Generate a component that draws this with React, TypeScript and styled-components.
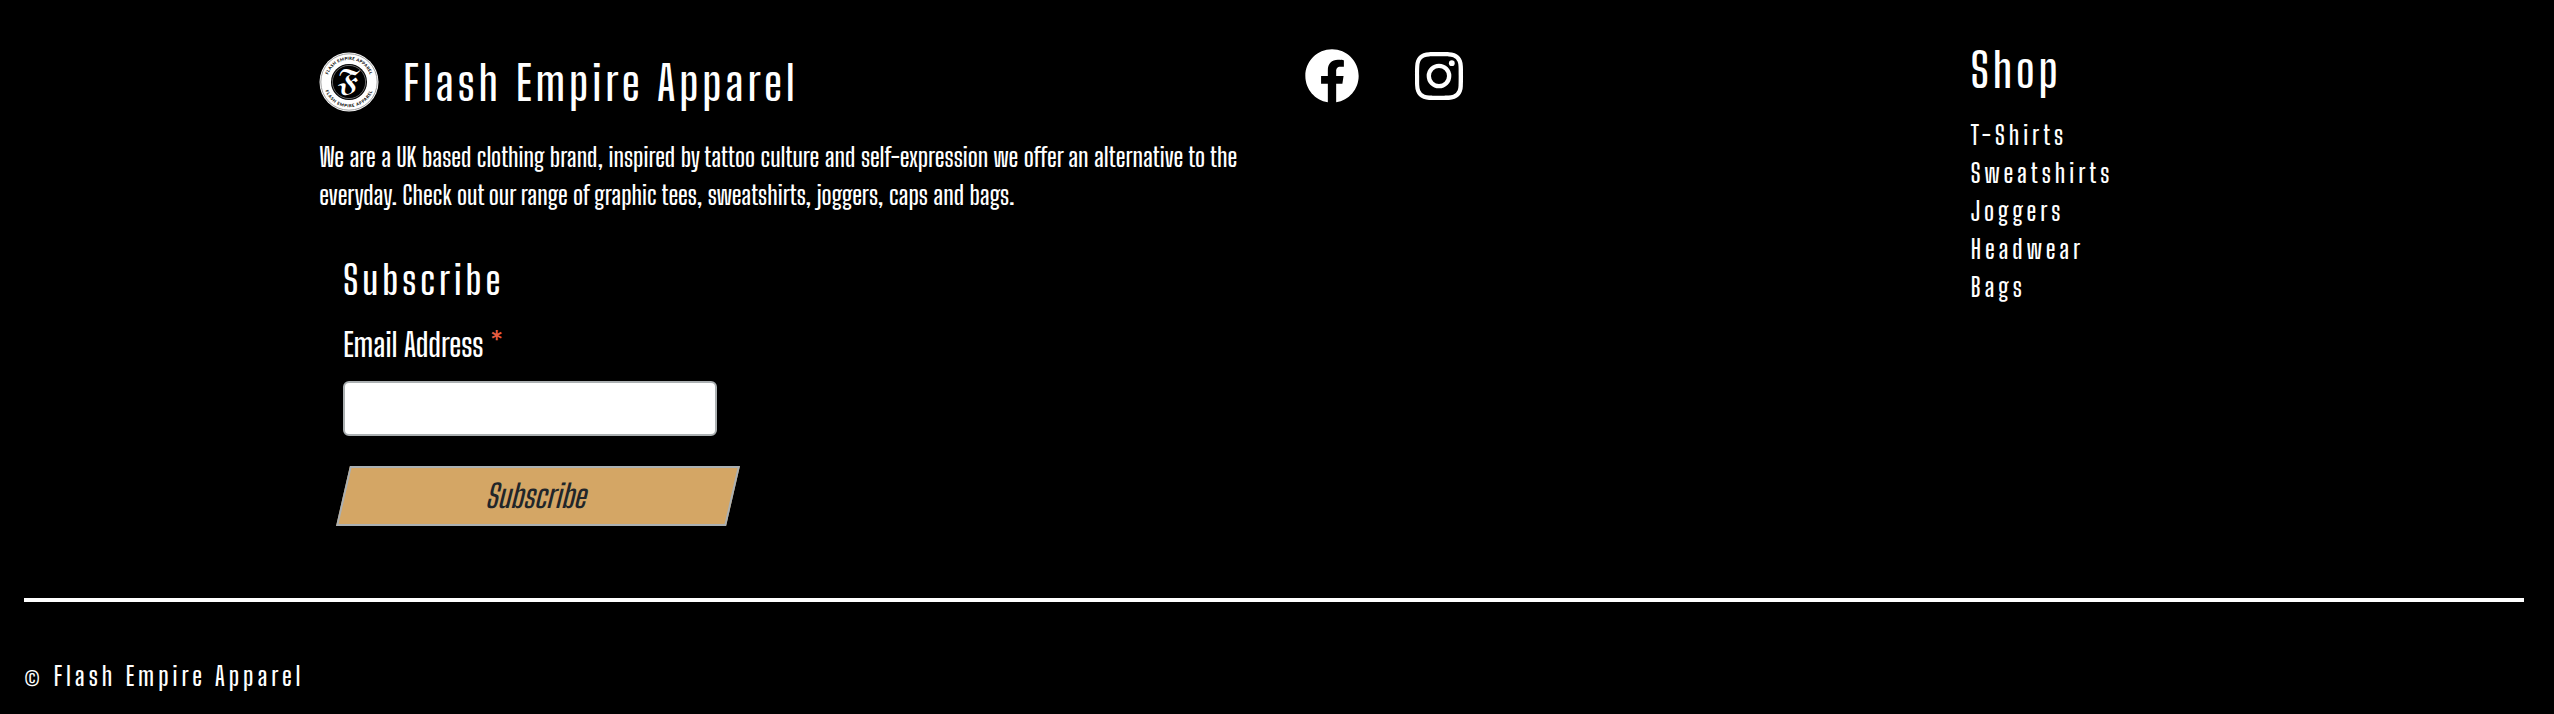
import React from "react";
import styled, { createGlobalStyle } from "styled-components";
import { BiLogoFacebookCircle, BiLogoInstagram } from "react-icons/bi";

const GlobalStyle = createGlobalStyle`
  *, *::before, *::after { box-sizing: border-box; }
  html, body { margin: 0; background: #000; }
  body {
    color: #fff;
    font-family: "Big Shoulders Display", "Roboto Condensed", sans-serif;
    font-size: 26px;
    font-weight: 600;
    line-height: 38px;
  }
`;

const Footer = styled.footer`
  min-height: 100vh;
  display: flex;
  flex-direction: column;
`;

const Columns = styled.div`
  display: grid;
  grid-template-columns: 940fr 631fr 264fr;
  column-gap: 40px;
  align-items: start;
  padding: 34px 12.5% 0;
`;

const Column = styled.section`
  min-width: 0;
`;

const Brand = styled.div`
  display: flex;
  align-items: center;
  gap: 24px;
  margin: 17px 0 25px;
`;

const Logo = styled.svg`
  width: 60px;
  height: 60px;
  flex: none;
`;

const Heading = styled.h2<{ $size: number; $line?: number }>`
  margin: 0;
  padding-top: 2px;
  font-size: ${(p) => p.$size}px;
  line-height: ${(p) => p.$line ?? 60}px;
  font-weight: 600;
  letter-spacing: 4px;
`;

const About = styled.p`
  margin: 0;
`;

const Form = styled.form`
  display: flex;
  flex-direction: column;
  align-items: flex-start;
  padding: 34px 24px 0;
`;

const Label = styled.label`
  display: flex;
  gap: 7px;
  margin: 15px 0 16px;
  font-size: 32px;
  line-height: 40px;
`;

const Required = styled.span`
  color: #e85c41;
  font-size: 48px;
  line-height: 50px;
  height: 40px;
`;

const EmailInput = styled.input`
  width: 374px;
  max-width: 100%;
  height: 55px;
  padding: 0 12px;
  border: 2px solid #abb0b2;
  border-radius: 6px;
  background: #fff;
  font: inherit;
`;

const SubmitButton = styled.button`
  position: relative;
  z-index: 0;
  width: 390px;
  max-width: 100%;
  height: 60px;
  margin-top: 30px;
  padding: 0 6px 0 0;
  border: 0;
  background: none;
  color: #212529;
  font: inherit;
  font-size: 32px;
  font-style: italic;
  cursor: pointer;

  &::before {
    content: "";
    position: absolute;
    inset: 0;
    z-index: -1;
    border: 2px solid #abb0b2;
    background: #d4a665;
    transform: skewX(-13deg);
  }
`;

const Social = styled.nav`
  display: flex;
  gap: 43px;
  padding-top: 10px;
`;

const SocialLink = styled.a`
  display: flex;
  color: #fff;
`;

const LinkList = styled.ul`
  margin: 12px 0 0;
  padding: 0;
  list-style: none;
`;

const ShopLink = styled.a`
  color: #fff;
  letter-spacing: 4px;
  text-decoration: none;
`;

const Rule = styled.hr`
  align-self: stretch;
  height: 4px;
  margin: 72px 30px 55px 24px;
  border: 0;
  background: #fff;
`;

const Copyright = styled.p`
  margin: 0 24px;
  letter-spacing: 4px;
`;

const shopLinks = ["T-Shirts", "Sweatshirts", "Joggers", "Headwear", "Bags"];

function Emblem() {
  return (
    <Logo viewBox="0 0 60 60" aria-hidden="true">
      <defs>
        <path id="ringTop" d="M7.8 30a22.2 22.2 0 0 1 44.4 0" />
        <path id="ringBottom" d="M4.8 30a25.2 25.2 0 0 0 50.4 0" />
      </defs>
      <circle cx="30" cy="30" r="29.5" fill="#fff" />
      <circle cx="30" cy="30" r="28.2" fill="none" stroke="#777" strokeWidth="0.7" />
      <circle cx="30" cy="30" r="18" fill="#000" />
      <circle cx="30" cy="30" r="16.6" fill="none" stroke="#999" strokeWidth="0.7" />
      <g fill="#000" fontFamily="Lato, sans-serif" fontWeight="900" fontSize="4.2" letterSpacing="0.3">
        <text>
          <textPath href="#ringTop" startOffset="50%" textAnchor="middle">FLASH EMPIRE APPAREL</textPath>
        </text>
        <text letterSpacing="0.6">
          <textPath href="#ringBottom" startOffset="50%" textAnchor="middle">FLASH EMPIRE APPAREL</textPath>
        </text>
      </g>
      <text x="30" y="39" fill="#fff" fontSize="27" textAnchor="middle" fontFamily='"DejaVu Math TeX Gyre", "DejaVu Sans", serif'>
        𝕱
      </text>
    </Logo>
  );
}

export default function App() {
  return (
    <>
      <GlobalStyle />
      <Footer>
        <Columns>
          <Column>
            <Brand>
              <Emblem />
              <Heading $size={48}>Flash Empire Apparel</Heading>
            </Brand>
            <About>
              We are a UK based clothing brand, inspired by tattoo culture and self-expression we offer an
              alternative to the everyday. Check out our range of graphic tees, sweatshirts, joggers, caps and
              bags.
            </About>
            <Form onSubmit={(e) => e.preventDefault()}>
              <Heading $size={40}>Subscribe</Heading>
              <Label htmlFor="email">
                Email Address <Required>*</Required>
              </Label>
              <EmailInput id="email" type="email" required />
              <SubmitButton type="submit">Subscribe</SubmitButton>
            </Form>
          </Column>
          <Social aria-label="Social media">
            <SocialLink href="#facebook" aria-label="Facebook">
              <BiLogoFacebookCircle size={64} />
            </SocialLink>
            <SocialLink href="#instagram" aria-label="Instagram">
              <BiLogoInstagram size={64} />
            </SocialLink>
          </Social>
          <Column>
            <Heading $size={48} $line={68}>Shop</Heading>
            <LinkList>
              {shopLinks.map((name) => (
                <li key={name}>
                  <ShopLink href={`#${name.toLowerCase()}`}>{name}</ShopLink>
                </li>
              ))}
            </LinkList>
          </Column>
        </Columns>
        <Rule />
        <Copyright>© Flash Empire Apparel</Copyright>
      </Footer>
    </>
  );
}
